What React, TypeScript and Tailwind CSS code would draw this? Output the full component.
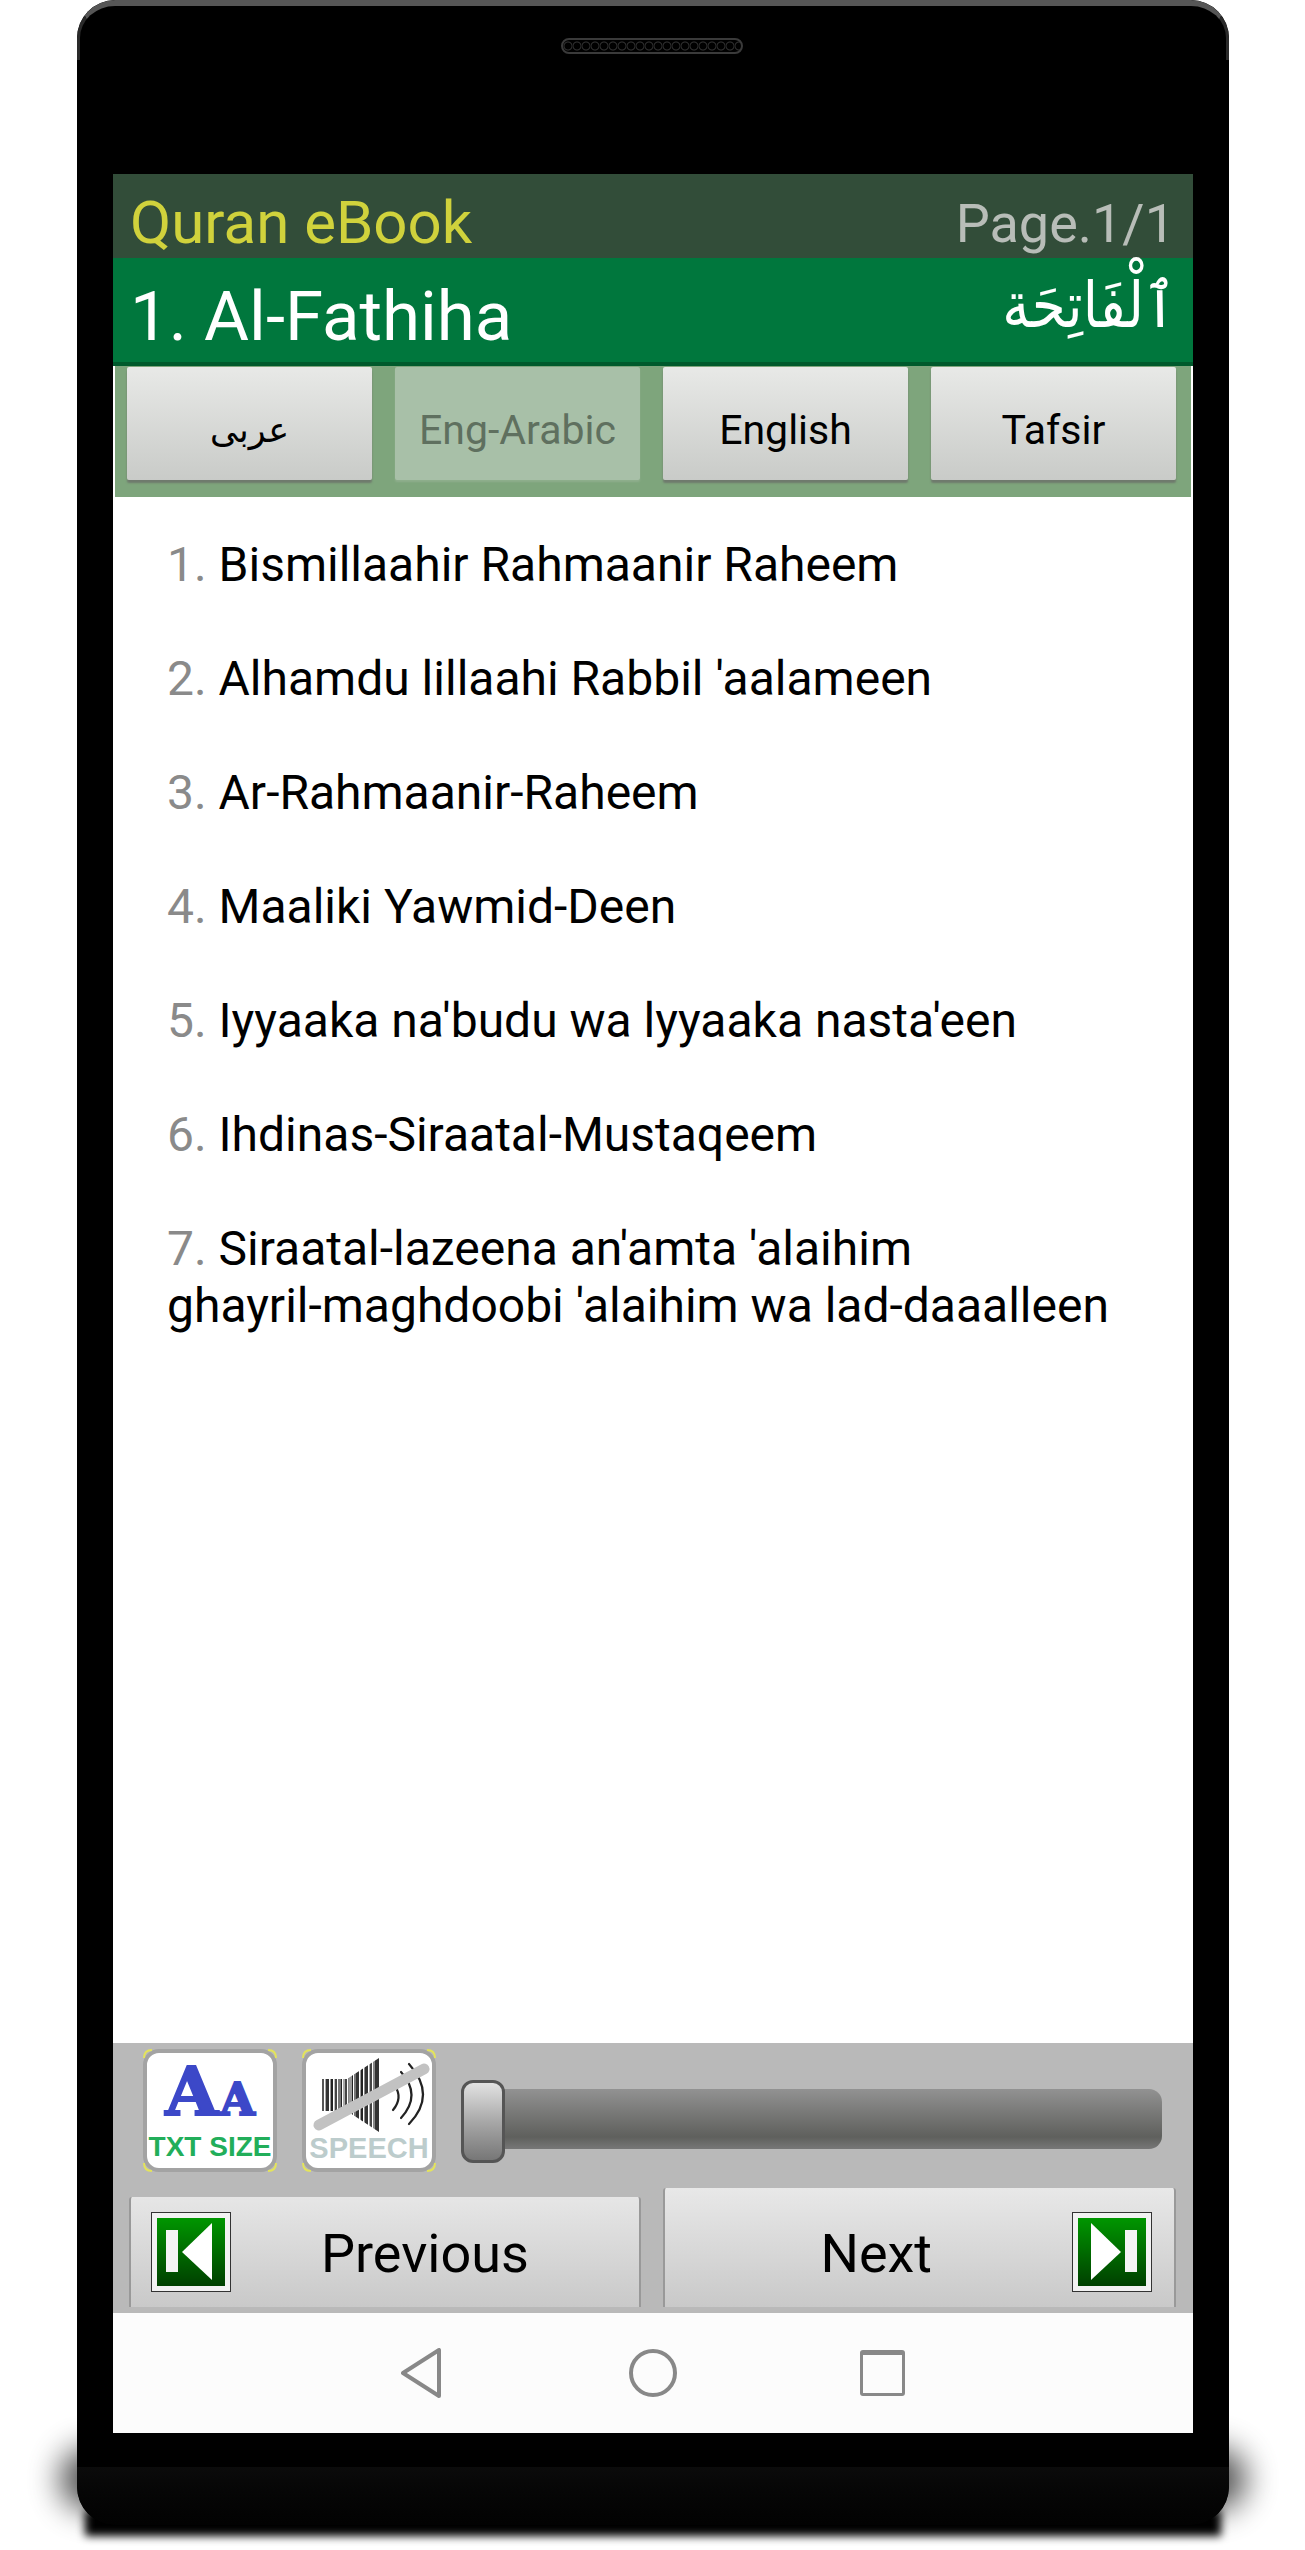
const verses: React.ReactNode[] = [
  'Bismillaahir Rahmaanir Raheem',
  "Alhamdu lillaahi Rabbil 'aalameen",
  'Ar-Rahmaanir-Raheem',
  'Maaliki Yawmid-Deen',
  "Iyyaaka na'budu wa lyyaaka nasta'een",
  'Ihdinas-Siraatal-Mustaqeem',
  <>
    Siraatal-lazeena an'amta 'alaihim <span className="whitespace-nowrap">ghayril-maghdoobi</span> 'alaihim wa lad-daaalleen
  </>,
];

// barcode-like bands inside the speaker drawing
const stripes = [
  [16, 2, '#555'], [19, 1, '#aaa'], [20, 3, '#333'], [24, 1, '#999'], [25, 2, '#222'], [28, 1, '#bbb'],
  [29, 2, '#444'], [32, 3, '#777'], [35, 1, '#222'], [37, 2, '#aaa'], [39, 2, '#444'], [42, 1, '#888'],
  [43, 3, '#999'], [46, 1, '#222'], [48, 2, '#777'], [50, 3, '#333'], [54, 1, '#999'], [55, 2, '#222'],
  [58, 1, '#888'], [59, 3, '#333'], [63, 1, '#aaa'], [64, 2, '#444'], [67, 2, '#888'], [69, 4, '#333'],
] as const;

function Tab({ label, dim, arabic }: { label: string; dim?: boolean; arabic?: boolean }) {
  return (
    <div
      className={`w-[245px] h-[113px] rounded-[2px] flex items-center justify-center pt-[14px] ${
        dim
          ? 'bg-[#a8c0a8] text-[#5f705f] shadow-[0_2px_2px_#8fae8d]'
          : 'bg-gradient-to-b from-[#e8e9e7] to-[#c9cbc8] text-black shadow-[0_3px_2px_#6f7a6d]'
      } ${arabic ? "font-['DejaVu_Sans',sans-serif] text-[35px]" : 'text-[41px]'}`}
    >
      {label}
    </div>
  );
}

function Corners() {
  return (
    <svg viewBox="0 0 134 123" className="absolute -left-[4px] -top-[4px] w-[134px] h-[123px]" fill="none" stroke="#e4e45a" strokeWidth="2">
      <path d="M1 9 Q1 1 9 1" />
      <path d="M125 1 Q133 1 133 9" />
      <path d="M1 114 Q1 122 9 122" />
      <path d="M125 122 Q133 122 133 114" />
    </svg>
  );
}

function SkipIcon({ next }: { next?: boolean }) {
  return (
    <svg viewBox="0 0 80 80" className="w-[80px] h-[80px] shrink-0">
      <defs>
        <linearGradient id={next ? 'gn' : 'gp'} x1="0" y1="0" x2="0" y2="1">
          <stop offset="0" stopColor="#009600" />
          <stop offset="1" stopColor="#004000" />
        </linearGradient>
      </defs>
      <rect x="0.5" y="0.5" width="79" height="79" fill="#f2f2f2" stroke="#333" />
      <rect x="6" y="6" width="68" height="68" fill={`url(#${next ? 'gn' : 'gp'})`} />
      {next ? (
        <>
          <path d="M19 11 L49 40 L19 68 Z" fill="#fff" />
          <rect x="53" y="18" width="12" height="42" fill="#f4f4f4" />
        </>
      ) : (
        <>
          <path d="M61 11 L31 40 L61 68 Z" fill="#fff" />
          <rect x="15" y="18" width="12" height="42" fill="#f4f4f4" />
        </>
      )}
    </svg>
  );
}

export default function App() {
  return (
    <div className="relative w-[1305px] h-[2550px] bg-white overflow-hidden font-['Roboto',sans-serif]">
      {/* soft shadow under the phone */}
      <div className="absolute left-[60px] top-[2448px] w-[1186px] h-[62px] rounded-[40px] bg-black opacity-70 blur-[16px]" />
      <div className="absolute left-[85px] top-[2510px] w-[1136px] h-[26px] bg-black blur-[4px]" />

      <div className="relative ml-[77px] w-[1152px] h-[2525px] rounded-[38px] bg-black overflow-hidden pt-[174px]">
        <div className="absolute inset-x-0 top-0 h-[60px] rounded-t-[38px] border-t-[6px] border-x-[3px] border-b-0 border-t-[#565656] border-x-[#2a2a2a]" />
        <div className="absolute left-[484px] top-[38px] w-[182px] h-[16px] rounded-full border-2 border-[#3a3a3a] bg-[repeating-radial-gradient(circle_at_5px_6px,#000_0,#000_3px,#333_4px,#000_5px)] bg-[length:9px_16px]" />
        <div className="absolute inset-x-0 bottom-0 h-[58px] rounded-b-[38px] bg-gradient-to-b from-[#0b0b0b] to-[#020202]" />

        <div className="relative mx-auto w-[1080px] h-[2259px] flex flex-col bg-white">
          <div className="h-[84px] shrink-0 bg-[#324d39] flex items-center justify-between pl-[17px] pr-[18px] pt-[14px]">
            <span className="text-[#d0d23c] text-[60px]">Quran eBook</span>
            <span className="text-[#b8bdb8] text-[54px]">Page.1/1</span>
          </div>
          <div className="h-[108px] shrink-0 bg-[#00773d] border-b-[4px] border-[#005a2c] flex items-center justify-between pl-[17px] pr-[17px] text-white">
            <span className="text-[69px] mt-[14px]">1. Al-Fathiha</span>
            <span dir="rtl" className="font-['DejaVu_Sans',sans-serif] text-[55px] mb-[10px] scale-y-[1.15]">ٱلْفَاتِحَة</span>
          </div>
          <div className="h-[131px] shrink-0 mx-[2px] bg-[#7ea57c] flex gap-[23px] pl-[12px] pt-[1px]">
            <Tab label="عربى" arabic />
            <Tab label="Eng-Arabic" dim />
            <Tab label="English" />
            <Tab label="Tafsir" />
          </div>

          <div className="flex-1 pt-[39px] pl-[54px] pr-[70px] text-[48px] leading-[57px] text-black">
            {verses.map((v, i) => (
              <p key={i} className="mb-[57px]">
                <span className="text-[#8a8a8a]">{i + 1}. </span>
                {v}
              </p>
            ))}
          </div>

          <div className="h-[270px] shrink-0 bg-[#b9b9b9] pt-[6px] flex flex-col">
            <div className="flex items-start pl-[30px] gap-[25px]">
              <div className="relative w-[134px] h-[123px] rounded-[16px] border-[4px] border-[#a3a3a3] bg-white flex flex-col items-center justify-between pt-[6px] pb-[8px]">
                <Corners />
                <div className="flex items-baseline gap-[2px] font-['DejaVu_Serif',serif] font-bold text-[#3c48c8] leading-none [-webkit-text-stroke:2px_#3c48c8]">
                  <span className="text-[68px] leading-[64px]">A</span>
                  <span className="text-[45px] leading-[64px]">A</span>
                </div>
                <span className="font-['Liberation_Sans',sans-serif] font-bold text-[#22ae5a] text-[28px] leading-[26px] whitespace-nowrap">TXT SIZE</span>
              </div>
              <div className="relative w-[134px] h-[123px] rounded-[16px] border-[4px] border-[#a3a3a3] bg-white flex flex-col items-center justify-end pb-[6px]">
                <Corners />
                <svg viewBox="0 0 126 90" className="absolute left-0 top-0 w-[126px] h-[90px]">
                  <defs>
                    <clipPath id="spk">
                      <path d="M16 26 H41 L73 5 V79 L41 58 H16 Z" />
                    </clipPath>
                  </defs>
                  <g clipPath="url(#spk)">
                    {stripes.map(([x, w, c], i) => (
                      <rect key={i} x={x} y="0" width={w} height="90" fill={c} />
                    ))}
                  </g>
                  <g fill="none" stroke="#222" strokeWidth="2.2" strokeLinecap="round">
                    <path d="M89 33 Q97 45 87 57" />
                    <path d="M95 19 Q116 42 95 65" />
                    <path d="M103 11 Q131 42 103 71" />
                  </g>
                  <path d="M13 72 L118 16" stroke="#c2c2c2" strokeWidth="11" strokeLinecap="round" />
                </svg>
                <span className="font-['Liberation_Sans',sans-serif] font-bold text-[#bccccc] text-[29px] leading-[27px]">SPEECH</span>
              </div>
              <div className="relative w-[701px] h-[83px] mt-[31px] pt-[9px]">
                <div className="ml-[18px] h-[60px] rounded-r-[13px] bg-gradient-to-b from-[#929292] via-[#5f605d] via-80% to-[#777]" />
                <div className="absolute left-0 top-0 w-[44px] h-[83px] rounded-[12px] border-[3px] border-[#555] bg-gradient-to-b from-[#e2e2e2] via-[#a8a8a8] to-[#777]" />
              </div>
            </div>
            <div className="flex items-end mt-[16px] pl-[16px] gap-[22px]">
              <div className="w-[512px] h-[110px] rounded-t-[3px] border-x-2 border-[#999] bg-gradient-to-b from-[#e6e6e6] to-[#c9c9c9] flex items-center pl-[20px]">
                <SkipIcon />
                <span className="ml-[90px] mt-[2px] text-[54px] text-black">Previous</span>
              </div>
              <div className="w-[513px] h-[119px] rounded-t-[3px] border-x-2 border-[#999] bg-gradient-to-b from-[#e8e8e8] to-[#c9c9c9] flex items-center justify-end pr-[22px] pt-[8px]">
                <span className="mr-[140px] mt-[4px] text-[54px] text-black">Next</span>
                <SkipIcon next />
              </div>
            </div>
          </div>

          <div className="h-[120px] shrink-0 bg-[#fcfcfc] flex items-center pl-[288px]">
            <svg viewBox="0 0 40 50" className="w-[40px] h-[50px]" fill="none" stroke="#888" strokeWidth="4" strokeLinejoin="round">
              <path d="M38 2 V48 L2 25 Z" />
            </svg>
            <svg viewBox="0 0 48 50" className="ml-[188px] w-[48px] h-[50px]" fill="none" stroke="#888" strokeWidth="4">
              <circle cx="24" cy="25" r="22" />
            </svg>
            <div className="ml-[183px] w-[45px] h-[46px] rounded-[3px] border-[3px] border-t-[5px] border-[#888]" />
          </div>
        </div>
      </div>
    </div>
  );
}
